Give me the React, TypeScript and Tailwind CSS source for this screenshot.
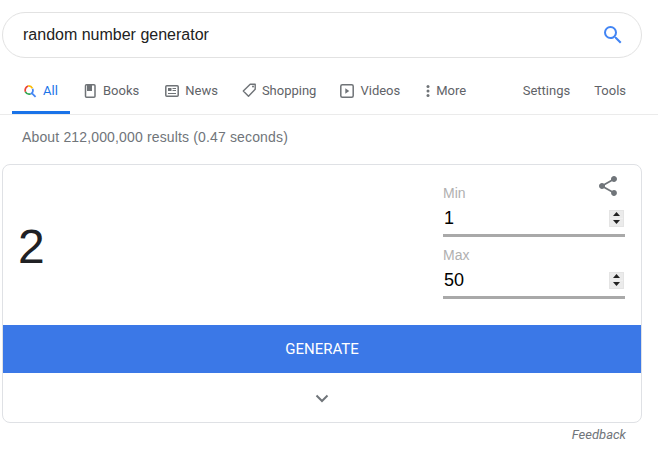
import React from 'react';

const tabText = "text-[13px] leading-4 text-[#5f6368]";

const Spinner = () => (
  <div className="w-[15px] h-[17px] flex flex-col gap-px bg-[#f0f0f0] border border-[#e4e4e4]">
    <div className="flex-1 flex items-center justify-center bg-[#ebebeb]">
      <svg width="7" height="4" viewBox="0 0 7 4"><path d="M3.5 0 7 4H0z" fill="#222" /></svg>
    </div>
    <div className="flex-1 flex items-center justify-center bg-[#ebebeb]">
      <svg width="7" height="4" viewBox="0 0 7 4"><path d="M0 0h7L3.5 4z" fill="#222" /></svg>
    </div>
  </div>
);

const NumberField = ({ label, value }: { label: string; value: string }) => (
  <div className="w-[182px]">
    <div className="text-[14px] leading-4 text-[#b0b0b0]">{label}</div>
    <div className="h-[32px] mt-[1px] pl-px pr-px flex items-center justify-between border-b-[3px] border-[#a9a9a9] box-content">
      <span className="text-[18px] leading-6 text-black">{value}</span>
      <Spinner />
    </div>
  </div>
);

const App: React.FC = () => {
  return (
    <div className="w-[658px] h-[450px] bg-white overflow-hidden font-['Roboto',sans-serif]">
      {/* Search box */}
      <div className="ml-[2px] mt-3 w-[640px] h-[46px] rounded-[23px] border border-[#e2e2e2] flex items-center justify-between pl-5 pr-[16px] font-['Liberation_Sans',sans-serif]">
        <span className="text-[16px] text-[#222]">random number generator</span>
        <svg width="24" height="24" viewBox="0 0 24 24" fill="#4285f4">
          <path d="M15.5 14h-.79l-.28-.27A6.471 6.471 0 0 0 16 9.5 6.5 6.5 0 1 0 9.5 16c1.61 0 3.09-.59 4.23-1.57l.27.28v.79l5 4.99L20.49 19l-4.99-5zm-6 0C7.01 14 5 11.99 5 9.5S7.01 5 9.5 5 14 7.01 14 9.5 11.99 14 9.5 14z" />
        </svg>
      </div>

      {/* Tabs */}
      <div className="mt-[25px] h-[32px] border-b border-[#ebebeb] flex items-start pl-3 pr-8 relative">
        <div className="w-[58px] h-[31px] flex items-start pt-0 gap-[6px] pl-[11px] border-b-[3px] border-[#1a73e8] box-border">
          <svg width="14" height="14" viewBox="0 0 24 24" className="mt-px" fill="none" strokeWidth="3">
            <path d="M4.2 13.5A7.5 7.5 0 0 1 9 3.4" stroke="#ea4335" />
            <path d="M9 3.4a7.5 7.5 0 0 1 7.2 4" stroke="#fbbc05" />
            <path d="M4.2 13.5A7.5 7.5 0 0 0 13 17" stroke="#34a853" />
            <path d="M13 17a7.5 7.5 0 0 0 3.5-9" stroke="#4285f4" />
            <path d="m15.5 16 6 6" stroke="#4285f4" />
          </svg>
          <span className="text-[13px] leading-4 text-[#1a73e8]">All</span>
        </div>
        <div className="ml-[14px] flex items-start gap-[6px]">
          <svg width="13" height="14" viewBox="0 0 13 14" className="mt-px" fill="none">
            <rect x="1.5" y="0.8" width="9.5" height="12.4" rx="1" stroke="#6f7377" strokeWidth="1.5" />
            <rect x="3" y="1" width="5" height="6" fill="#6f7377" />
          </svg>
          <span className={tabText}>Books</span>
        </div>
        <div className="ml-[26px] flex items-start gap-[6px]">
          <svg width="14" height="14" viewBox="0 0 14 14" className="mt-px" fill="none">
            <rect x="0.8" y="1.8" width="12.4" height="10.4" rx="1" stroke="#6f7377" strokeWidth="1.5" />
            <rect x="3" y="4" width="3.5" height="3" fill="#6f7377" />
            <path d="M7.5 4.5H11M7.5 6.5H11M3 9.5h8" stroke="#6f7377" />
          </svg>
          <span className={tabText}>News</span>
        </div>
        <div className="ml-[24px] flex items-start gap-[5px]">
          <svg width="15" height="15" viewBox="0 0 15 15" fill="none">
            <path d="M8.2 1.2h5v5l-6.7 7-5.2-5.2z" stroke="#6f7377" strokeWidth="1.4" strokeLinejoin="round" />
            <circle cx="11" cy="3.5" r="1" fill="#6f7377" />
          </svg>
          <span className={tabText}>Shopping</span>
        </div>
        <div className="ml-[24px] flex items-start gap-[6px]">
          <svg width="14" height="14" viewBox="0 0 14 14" className="mt-px" fill="none">
            <rect x="0.8" y="0.8" width="12.4" height="12.4" rx="1.5" stroke="#6f7377" strokeWidth="1.5" />
            <path d="M5.3 4.2 9.3 7l-4 2.8z" fill="#6f7377" />
          </svg>
          <span className={tabText}>Videos</span>
        </div>
        <div className="ml-[26px] flex items-start gap-[6px]">
          <svg width="4" height="14" viewBox="0 0 4 14" className="mt-px" fill="#6f7377">
            <circle cx="2" cy="2.5" r="1.5" />
            <circle cx="2" cy="7" r="1.5" />
            <circle cx="2" cy="11.5" r="1.5" />
          </svg>
          <span className={tabText}>More</span>
        </div>
        <span className={`${tabText} ml-auto`}>Settings</span>
        <span className={`${tabText} ml-[24px]`}>Tools</span>
      </div>

      {/* Result stats */}
      <div className="ml-[22px] mt-[14px] text-[14px] leading-4 tracking-[0.15px] text-[#70757a] font-['Liberation_Sans',sans-serif]">
        About 212,000,000 results (0.47 seconds)
      </div>

      {/* Calculator card */}
      <div className="ml-[2px] mt-[19px] w-[640px] h-[259px] border border-[#dfe1e5] rounded-lg overflow-hidden flex flex-col font-['Liberation_Sans',sans-serif]">
        <div className="h-[160px] flex relative">
          <div className="flex-1 pl-[15px] pt-[52px] text-[48px] leading-[60px] text-[#202124]">2</div>
          <div className="pt-5 pr-4 flex flex-col gap-[10px]">
            <NumberField label="Min" value="1" />
            <NumberField label="Max" value="50" />
          </div>
          <svg width="24" height="24" viewBox="0 0 24 24" fill="#70757a" className="absolute right-[21px] top-[9px]">
            <path d="M18 16.08c-.76 0-1.44.3-1.96.77L8.91 12.7c.05-.23.09-.46.09-.7s-.04-.47-.09-.7l7.05-4.11c.54.5 1.25.81 2.04.81 1.66 0 3-1.34 3-3s-1.34-3-3-3-3 1.34-3 3c0 .24.04.47.09.7L8.04 9.81C7.5 9.31 6.79 9 6 9c-1.66 0-3 1.34-3 3s1.34 3 3 3c.79 0 1.5-.31 2.04-.81l7.12 4.16c-.05.21-.08.43-.08.65 0 1.61 1.31 2.92 2.92 2.92s2.92-1.31 2.92-2.92-1.31-2.92-2.92-2.92z" />
          </svg>
        </div>
        <div className="h-[48px] bg-[#3b78e7] flex items-center justify-center font-['Roboto',sans-serif] text-[15px] text-white">
          GENERATE
        </div>
        <div className="flex-1 flex items-center justify-center pt-[2px]">
          <svg width="14" height="9" viewBox="0 0 14 9" fill="none">
            <path d="M1.5 1.5 7 7l5.5-5.5" stroke="#70757a" strokeWidth="2" />
          </svg>
        </div>
      </div>

      {/* Feedback */}
      <div className="mt-[4px] pr-8 text-right text-[13px] leading-4 italic text-[#70757a]">Feedback</div>
    </div>
  );
};

export default App;
